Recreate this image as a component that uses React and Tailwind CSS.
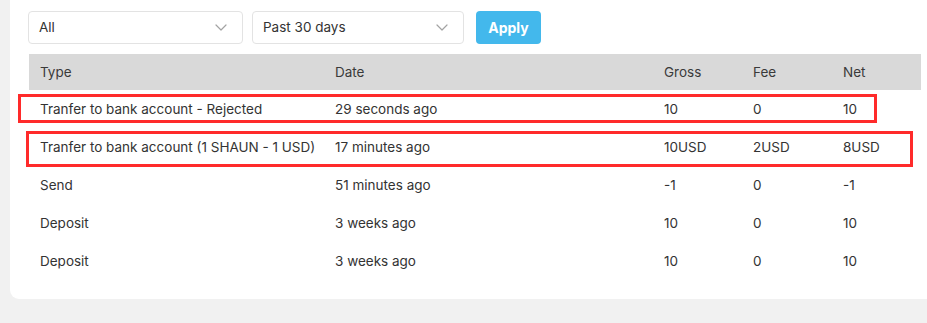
import React from "react";

const rows = [
  { type: "Tranfer to bank account - Rejected", date: "29 seconds ago", gross: "10", fee: "0", net: "10" },
  { type: "Tranfer to bank account (1 SHAUN - 1 USD)", date: "17 minutes ago", gross: "10USD", fee: "2USD", net: "8USD" },
  { type: "Send", date: "51 minutes ago", gross: "-1", fee: "0", net: "-1" },
  { type: "Deposit", date: "3 weeks ago", gross: "10", fee: "0", net: "10" },
  { type: "Deposit", date: "3 weeks ago", gross: "10", fee: "0", net: "10" },
];

const cols = "grid grid-cols-[295px_329px_89px_90px_89px] whitespace-nowrap";

function Chevron() {
  return (
    <svg width="12" height="7" viewBox="0 0 12 7" fill="none">
      <path d="M1 1l5 5 5-5" stroke="#a3a3a3" strokeWidth="1.2" strokeLinecap="round" strokeLinejoin="round" />
    </svg>
  );
}

function Select({ label, width }) {
  return (
    <div className={`${width} h-[33px] flex items-center justify-between pl-[10px] pr-[15px] border border-[#e3e3e3] rounded-[4px] bg-white text-[13.5px] text-[#333]`}>
      <span>{label}</span>
      <Chevron />
    </div>
  );
}

export default function App() {
  return (
    <div className="w-[927px] h-[323px] bg-[#f1f1f1] overflow-hidden" style={{ fontFamily: "Inter, 'Noto Sans', sans-serif" }}>
      <div className="relative ml-[10px] w-[930px] bg-white rounded-bl-[9px] pt-[11px] pb-[19px]">
        {/* ── Filters ── */}
        <div className="flex items-center pl-[18px]">
          <Select label="All" width="w-[215px]" />
          <div className="w-[9px]" />
          <Select label="Past 30 days" width="w-[212px]" />
          <button className="ml-[12px] h-[33px] w-[65px] rounded-[4px] bg-[#43b8ec] text-white text-[14px] font-bold">
            Apply
          </button>
        </div>

        {/* ── Table ── */}
        <div className="mt-[10px] ml-[19px] w-[892px] text-[13.5px] text-[#333]">
          <div className={`${cols} h-[36px] items-center bg-[#d9d9d9] text-[#3a3a3a]`}>
            <div className="pl-[11px]">Type</div>
            <div className="pl-[11px]">Date</div>
            <div className="pl-[11px]">Gross</div>
            <div className="pl-[11px]">Fee</div>
            <div className="pl-[11px]">Net</div>
          </div>
          {rows.map((r, i) => (
            <div key={i} className={`${cols} h-[38px] items-center`}>
              <div className="pl-[11px]">{r.type}</div>
              <div className="pl-[11px]">{r.date}</div>
              <div className="pl-[11px]">{r.gross}</div>
              <div className="pl-[11px]">{r.fee}</div>
              <div className="pl-[11px]">{r.net}</div>
            </div>
          ))}
        </div>

        {/* ── Annotation boxes ── */}
        <div className="absolute left-[8px] top-[94px] w-[859px] h-[29px] border-[3px] border-[#ff2a2a]" />
        <div className="absolute left-[16px] top-[131px] w-[887px] h-[36px] border-[3px] border-[#ff2a2a]" />
      </div>
    </div>
  );
}
